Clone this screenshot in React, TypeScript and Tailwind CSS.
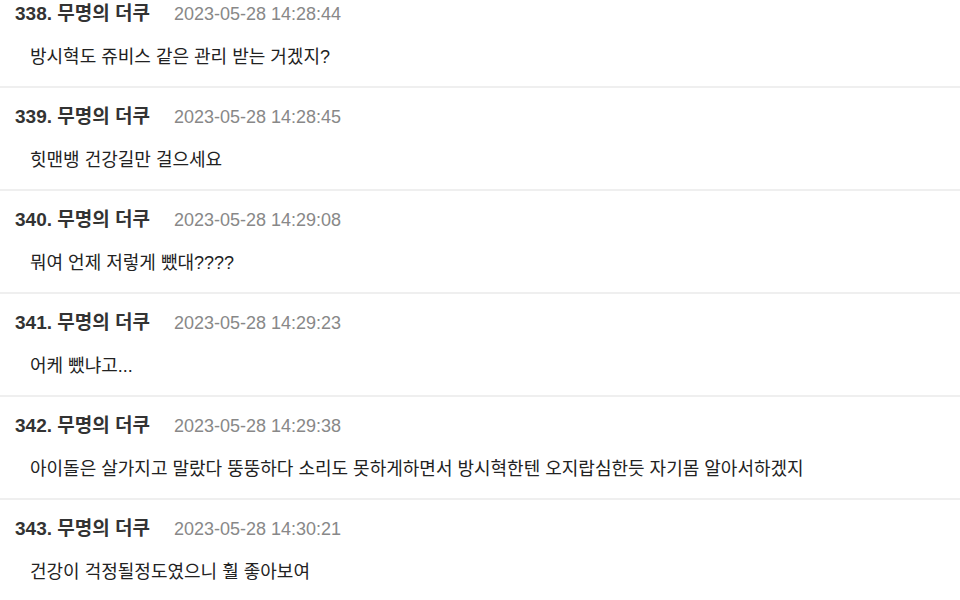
const comments = [
  { no: 338, time: "2023-05-28 14:28:44", text: "방시혁도 쥬비스 같은 관리 받는 거겠지?" },
  { no: 339, time: "2023-05-28 14:28:45", text: "힛맨뱅 건강길만 걸으세요" },
  { no: 340, time: "2023-05-28 14:29:08", text: "뭐여 언제 저렇게 뺐대????" },
  { no: 341, time: "2023-05-28 14:29:23", text: "어케 뺐냐고..." },
  {
    no: 342,
    time: "2023-05-28 14:29:38",
    text: "아이돌은 살가지고 말랐다 뚱뚱하다 소리도 못하게하면서 방시혁한텐 오지랍심한듯 자기몸 알아서하겠지",
  },
  { no: 343, time: "2023-05-28 14:30:21", text: "건강이 걱정될정도였으니 훨 좋아보여" },
];

export default function App() {
  return (
    <div
      className="h-[600px] w-[960px] overflow-hidden bg-white"
      style={{ fontFamily: '"Liberation Sans", "Noto Sans CJK KR", sans-serif' }}
    >
      {comments.map((c, i) => (
        <div
          key={c.no}
          className={`border-b-2 border-[#efefef] pb-[17px] ${i === 0 ? "pt-[2px]" : "pt-[17px]"}`}
        >
          {/* header: number, nickname, timestamp */}
          <div className="flex h-6 items-center pl-[15px]">
            <span className="text-[19px] font-bold text-[#333]">
              {c.no}. 무명의 더쿠
            </span>
            <span className="ml-6 text-[18px] text-[#888]">{c.time}</span>
          </div>
          {/* body */}
          <div className="mt-[19px] flex h-6 items-center pl-[30px] text-[18px] text-[#222]">
            {c.text}
          </div>
        </div>
      ))}
    </div>
  );
}
